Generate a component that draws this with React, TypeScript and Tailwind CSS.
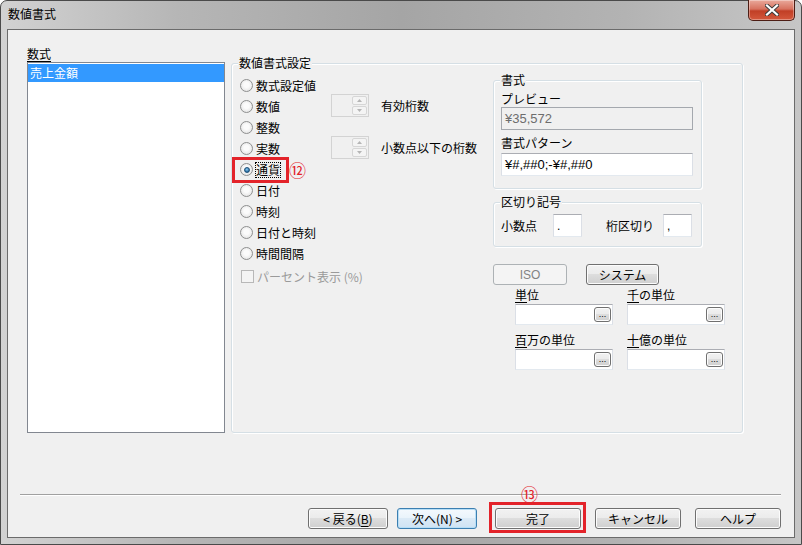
import React from 'react';

const jp = "font-['Noto_Sans_CJK_JP',sans-serif]";
const lat = "font-['Liberation_Sans','Noto_Sans_CJK_JP',sans-serif]";

const groupBox = 'border border-[#d5dfe5] rounded-[3px] shadow-[inset_1px_1px_0_#ffffff,1px_1px_0_#ffffff]';
const textBox = 'border border-[#abadb3] border-x-[#dbdfe6] border-b-[#e3e9ef] bg-white';
const btnFace =
  'border border-[#707070] rounded-[3px] bg-[linear-gradient(#f2f2f2_0%,#ebebeb_49%,#dddddd_50%,#cfcfcf_100%)] shadow-[inset_0_0_0_1px_#fcfcfc]';

const Radio = ({ checked }: { checked?: boolean }) => (
  <span className="w-[13px] h-[13px] rounded-full border border-[#8e8f8f] bg-[radial-gradient(circle_at_50%_45%,#fbfbfb_30%,#dcdcdc_100%)] flex items-center justify-center shrink-0">
    {checked && (
      <span className="w-[6px] h-[6px] rounded-full bg-[radial-gradient(circle_at_45%_35%,#8fd0f5,#1b5f95_80%)] border border-[#1d4f78]" />
    )}
  </span>
);

const GroupLabel = ({ children }: { children: React.ReactNode }) => (
  <div className="-mt-[9px] ml-[6px] px-[1px] w-fit bg-[#f0f0f0] h-[16px] leading-[16px]">{children}</div>
);

const Spin = ({ label }: { label: string }) => (
  <div className="flex items-center">
    <div className="w-[38px] h-[23px] border border-[#d3d3d3] bg-[#f0f0f0] flex justify-end items-center pr-[1px]">
      <div className="w-[15px] h-[19px] flex flex-col gap-px">
        <div className="flex-1 border border-[#d6d6d6] rounded-[2px] bg-[#f4f4f4] flex items-center justify-center">
          <svg width="5" height="3" viewBox="0 0 5 3">
            <path d="M0 3 L2.5 0 L5 3 Z" fill="#b5b5b5" />
          </svg>
        </div>
        <div className="flex-1 border border-[#d6d6d6] rounded-[2px] bg-[#f4f4f4] flex items-center justify-center">
          <svg width="5" height="3" viewBox="0 0 5 3">
            <path d="M0 0 L2.5 3 L5 0 Z" fill="#b5b5b5" />
          </svg>
        </div>
      </div>
    </div>
    <span className="ml-[12px] whitespace-nowrap">{label}</span>
  </div>
);

const UnitField = ({ first, rest }: { first: string; rest: string }) => (
  <div className="flex flex-col">
    <div className="h-[16px] leading-[16px] whitespace-nowrap">
      <span className="underline underline-offset-2">{first}</span>
      {rest}
    </div>
    <div className={`mt-[1px] h-[21px] ${textBox} flex items-center justify-end pr-[1px]`}>
      <div className={`w-[17px] h-[15px] ${btnFace} flex items-end justify-center text-[9px] leading-[9px] pb-[2px] ${lat}`}>
        ...
      </div>
    </div>
  </div>
);

const Button = ({
  children,
  w,
  focus,
  disabled,
}: {
  children: React.ReactNode;
  w: string;
  focus?: boolean;
  disabled?: boolean;
}) => {
  let cls = btnFace;
  if (focus)
    cls =
      'border border-[#3c7fb1] rounded-[3px] bg-[linear-gradient(#f4f9fd_0%,#e9f3fb_49%,#dbeaf6_50%,#cfe3f3_100%)] shadow-[inset_0_0_0_1px_#b7def6]';
  if (disabled) cls = 'border border-[#adb2b5] rounded-[3px] bg-[#f4f4f4] text-[#838383]';
  return (
    <div className={`${w} h-[21px] ${cls} flex items-center justify-center leading-[16px] whitespace-nowrap`}>
      {children}
    </div>
  );
};

export default function App() {
  const radios = ['数式設定値', '数値', '整数', '実数', '通貨', '日付', '時刻', '日付と時刻', '時間間隔'];

  return (
    <div
      className={`relative w-[802px] h-[545px] rounded-t-[7px] border border-[#4a4a4a] bg-[linear-gradient(90deg,#d2d2d2_0%,#b6b6b6_22%,#a5a5a5_50%,#b3b3b3_78%,#c6c6c6_100%)] flex flex-col px-[6px] pb-[6px] text-[12px] text-black ${jp}`}
    >
      {/* title bar */}
      <div className="h-[28px] pl-[1px] pt-[5px] leading-[16px] text-[12px]">数値書式</div>

      {/* close */}
      <div className="absolute -top-px right-[6px] w-[47px] h-[21px] rounded-b-[5px] border border-[#4d1d14] border-t-0 bg-[linear-gradient(#e9a99b_0%,#d7725f_45%,#c13f26_55%,#d4583c_100%)] shadow-[inset_0_0_0_1px_rgba(255,255,255,0.35)] flex items-center justify-center">
        <svg width="14" height="12" viewBox="0 0 14 12">
          <path d="M2 1.5 L12 10.5 M12 1.5 L2 10.5" stroke="#3a3a3a" strokeWidth="4" strokeLinecap="square" />
          <path d="M2 1.5 L12 10.5 M12 1.5 L2 10.5" stroke="#ffffff" strokeWidth="2.2" strokeLinecap="square" />
        </svg>
      </div>

      {/* client */}
      <div className="relative flex-1 border border-[#6b6b6b] bg-[#f0f0f0] flex flex-col">
        <div className="flex pl-[19px] pt-[16px]">
          {/* left list */}
          <div className="w-[198px] flex flex-col">
            <div className="h-[16px] leading-[16px]">
              <span className="underline underline-offset-2">数式</span>
            </div>
            <div className="h-[371px] border border-[#828790] bg-white pt-px">
              <div className="h-[18px] leading-[18px] bg-[#3399ff] text-white pl-[2px]">売上金額</div>
            </div>
          </div>

          {/* main group */}
          <div className={`ml-[6px] mt-[17px] w-[512px] h-[370px] ${groupBox}`}>
            <GroupLabel>数値書式設定</GroupLabel>
            <div className="flex mt-[4px] pl-[8px] items-start">
              {/* radios */}
              <div className="w-[91px] flex flex-col">
                {radios.map((r) => (
                  <div key={r} className="h-[21px] flex items-center whitespace-nowrap">
                    <Radio checked={r === '通貨'} />
                    <span
                      className={
                        r === '通貨'
                          ? 'ml-[2px] border border-dotted border-black leading-[14px]'
                          : 'ml-[3px] leading-[16px]'
                      }
                    >
                      {r}
                    </span>
                  </div>
                ))}
                <div className="mt-[2px] h-[21px] flex items-center whitespace-nowrap text-[#9a9a9a]">
                  <span className="ml-px w-[13px] h-[13px] border border-[#b8b8b8] bg-[#f4f4f4] shrink-0" />
                  <span className="ml-[3px]">パーセント表示 (%)</span>
                </div>
              </div>

              {/* spins */}
              <div className="w-[162px] flex flex-col pt-[19px] gap-[19px]">
                <Spin label="有効桁数" />
                <Spin label="小数点以下の桁数" />
              </div>

              {/* right panel */}
              <div className="flex flex-col">
                <div className={`mt-[5px] w-[209px] h-[109px] ${groupBox}`}>
                  <GroupLabel>書式</GroupLabel>
                  <div className="mt-[3px] pl-[7px] h-[16px] leading-[16px]">プレビュー</div>
                  <div
                    className={`ml-[7px] w-[192px] h-[23px] border border-[#a4a8ae] bg-[#f0f0f0] text-[#6d6d6d] pl-[3px] flex items-center text-[13px] ${lat}`}
                  >
                    ¥35,572
                  </div>
                  <div className="mt-[5px] pl-[7px] h-[16px] leading-[16px]">書式パターン</div>
                  <div className={`mt-[2px] ml-[7px] w-[192px] h-[23px] ${textBox} pl-[3px] flex items-center text-[13px] ${lat}`}>
                    ¥#,##0;-¥#,##0
                  </div>
                </div>

                <div className={`mt-[13px] w-[209px] h-[45px] ${groupBox}`}>
                  <GroupLabel>区切り記号</GroupLabel>
                  <div className="mt-[4px] pl-[7px] flex items-center">
                    <span className="w-[52px]">小数点</span>
                    <div className={`w-[29px] h-[23px] ${textBox} pl-[3px] flex items-center ${lat}`}>.</div>
                    <span className="ml-[24px] w-[57px]">桁区切り</span>
                    <div className={`w-[29px] h-[23px] ${textBox} pl-[3px] flex items-center ${lat}`}>,</div>
                  </div>
                </div>

                <div className="mt-[17px] flex">
                  <Button w="w-[74px]" disabled>
                    <span className={lat}>ISO</span>
                  </Button>
                  <div className="ml-[19px]">
                    <Button w="w-[73px]">システム</Button>
                  </div>
                </div>

                <div className="mt-[2px] pl-[22px] grid grid-cols-[98px_98px] gap-x-[14px] gap-y-[7px]">
                  <UnitField first="単" rest="位" />
                  <UnitField first="千" rest="の単位" />
                  <UnitField first="百" rest="万の単位" />
                  <UnitField first="十" rest="億の単位" />
                </div>
              </div>
            </div>
          </div>
        </div>

        {/* separator */}
        <div className="mt-[61px] ml-[12px] w-[761px] h-[2px] border-t border-[#a0a0a0] border-b border-b-white" />

        {/* buttons */}
        <div className="mt-[12px] pl-[300px] flex">
          <Button w="w-[80px]">
            &lt; 戻る(<span className="underline underline-offset-2">B</span>)
          </Button>
          <div className="ml-[9px]">
            <Button w="w-[80px]" focus>
              次へ(N) &gt;
            </Button>
          </div>
          <div className="ml-[18px]">
            <Button w="w-[86px]">完了</Button>
          </div>
          <div className="ml-[14px]">
            <Button w="w-[86px]">キャンセル</Button>
          </div>
          <div className="ml-[14px]">
            <Button w="w-[86px]">ヘルプ</Button>
          </div>
        </div>

        {/* annotations */}
        <div className="absolute left-[224px] top-[127px] w-[57px] h-[26px] border-[3px] border-[#e3232a]" />
        <div className="absolute left-[281px] top-[131px] text-[17px] leading-[18px] text-[#e3232a]">⑫</div>
        <div className="absolute left-[513px] top-[455px] text-[17px] leading-[18px] text-[#e3232a]">⑬</div>
        <div className="absolute left-[481px] top-[472px] w-[97px] h-[31px] border-[3px] border-[#e3232a]" />
      </div>
    </div>
  );
}
